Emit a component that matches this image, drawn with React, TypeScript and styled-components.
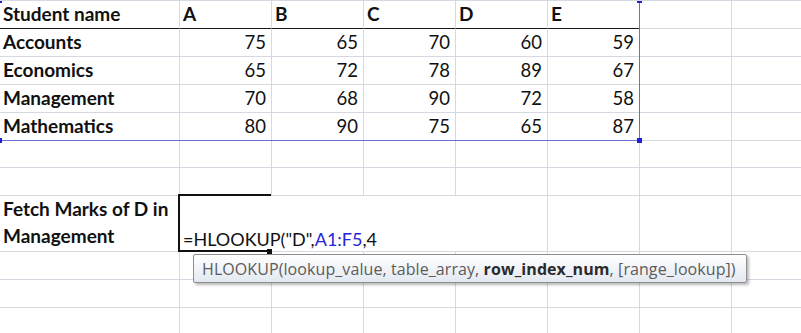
import React from "react";
import styled, { createGlobalStyle } from "styled-components";

const GlobalStyle = createGlobalStyle`
  html, body {
    margin: 0;
    padding: 0;
    background: #ffffff;
    overflow: hidden;
  }
  body {
    font-family: Lato, "Open Sans", sans-serif;
  }
`;

const GRID = "#d6d9e2";
const COL_WIDTHS = [180, 92, 92, 92, 92, 92, 92, 92];
const ROW_HEIGHTS = [28, 28, 28, 28, 28, 27, 28, 56, 28, 28, 28];

const Sheet = styled.div`
  position: relative;
  display: grid;
  grid-template-columns: ${COL_WIDTHS.map((w) => `${w}px`).join(" ")};
  grid-template-rows: ${ROW_HEIGHTS.map((h) => `${h}px`).join(" ")};
  border-top: 1px solid ${GRID};
  width: 801px;
  height: 333px;
  overflow: hidden;
  background: #fff;
`;

const Cell = styled.div<{ $align?: "left" | "right"; $bold?: boolean; $rule?: boolean }>`
  box-sizing: border-box;
  border-right: 1px solid ${GRID};
  border-bottom: 1px solid ${({ $rule }) => ($rule ? "#1a1a1a" : GRID)};
  display: flex;
  align-items: flex-end;
  justify-content: ${({ $align }) => ($align === "right" ? "flex-end" : "flex-start")};
  padding: 0 5px 3px 3px;
  font-size: ${({ $bold }) => ($bold ? "19px" : "18.5px")};
  line-height: 22px;
  font-weight: ${({ $bold }) => ($bold ? 700 : 400)};
  color: #111;
  white-space: nowrap;
`;

const WrapCell = styled(Cell)`
  white-space: normal;
  line-height: 27px;
  padding: 0 2px 2px 3px;
`;

const EditCell = styled.div`
  position: relative;
  grid-column: span 4;
  box-sizing: border-box;
  border-right: 1px solid ${GRID};
  border-bottom: 1px solid ${GRID};
  display: flex;
  align-items: flex-end;
  padding: 0 0 1px 3px;
  font-size: 18px;
  line-height: 22px;
  color: #111;
  white-space: nowrap;

  &::before {
    content: "";
    position: absolute;
    top: -2px;
    left: -2px;
    width: 91px;
    height: 54px;
    border: 2px solid #111;
    border-right: none;
  }

  &::after {
    content: "";
    position: absolute;
    left: 87px;
    bottom: -3px;
    width: 5px;
    height: 5px;
    background: #111;
  }
`;

const Ref = styled.span`
  color: #2626d9;
`;

const ColumnMark = styled.div`
  position: absolute;
  top: -1px;
  left: 179px;
  width: 92px;
  height: 1px;
  background: #f2b867;
`;

const Selection = styled.div`
  position: absolute;
  top: -2px;
  left: -1px;
  width: 641px;
  height: 142px;
  box-sizing: border-box;
  border: 1px solid #6c6cd6;
  pointer-events: none;
`;

const Handle = styled.div<{ $x: "left" | "right"; $y: "top" | "bottom" }>`
  position: absolute;
  width: 5px;
  height: 5px;
  background: #1f1fd8;
  ${({ $x }) => ($x === "left" ? "left: -3px;" : "right: -3px;")}
  ${({ $y }) => ($y === "top" ? "top: -2px;" : "bottom: -3px;")}
`;

const Tooltip = styled.div`
  position: absolute;
  left: 193px;
  top: 253px;
  width: 554px;
  height: 29px;
  box-sizing: border-box;
  border: 1px solid #8e8e8e;
  border-radius: 2px;
  background: linear-gradient(#ffffff, #e3e8f1);
  box-shadow: 2px 2px 3px rgba(0, 0, 0, 0.28);
  display: flex;
  align-items: center;
  padding-left: 8px;
  font-family: "Open Sans", sans-serif;
  font-size: 16px;
  letter-spacing: 0.08px;
  color: #5c5c5c;
  white-space: nowrap;

  b {
    color: #2b2b2b;
    font-weight: 700;
  }
`;

const header = ["Student name", "A", "B", "C", "D", "E"];
const rows: [string, number[]][] = [
  ["Accounts", [75, 65, 70, 60, 59]],
  ["Economics", [65, 72, 78, 89, 67]],
  ["Management", [70, 68, 90, 72, 58]],
  ["Mathematics", [80, 90, 75, 65, 87]],
];

const blanks = (n: number, key: string) =>
  Array.from({ length: n }, (_, i) => <Cell key={`${key}-${i}`} />);

export default function App() {
  return (
    <>
      <GlobalStyle />
      <Sheet>
        {header.map((h) => (
          <Cell key={h} $bold $rule>
            {h}
          </Cell>
        ))}
        {blanks(2, "h")}

        {rows.map(([name, marks]) => (
          <React.Fragment key={name}>
            <Cell $bold>{name}</Cell>
            {marks.map((m, i) => (
              <Cell key={i} $align="right">
                {m}
              </Cell>
            ))}
            {blanks(2, name)}
          </React.Fragment>
        ))}

        {blanks(8, "e1")}
        {blanks(8, "e2")}

        <WrapCell $bold>Fetch Marks of D in Management</WrapCell>
        <EditCell>
          =HLOOKUP("D",<Ref>A1:F5</Ref>,4
        </EditCell>
        {blanks(3, "f")}

        {blanks(8, "e3")}
        {blanks(8, "e4")}
        {blanks(8, "e5")}

        <ColumnMark />
        <Selection>
          <Handle $x="left" $y="top" />
          <Handle $x="right" $y="top" />
          <Handle $x="left" $y="bottom" />
          <Handle $x="right" $y="bottom" />
        </Selection>
        <Tooltip>
          HLOOKUP(lookup_value, table_array,&nbsp;<b>row_index_num</b>, [range_lookup])
        </Tooltip>
      </Sheet>
    </>
  );
}
